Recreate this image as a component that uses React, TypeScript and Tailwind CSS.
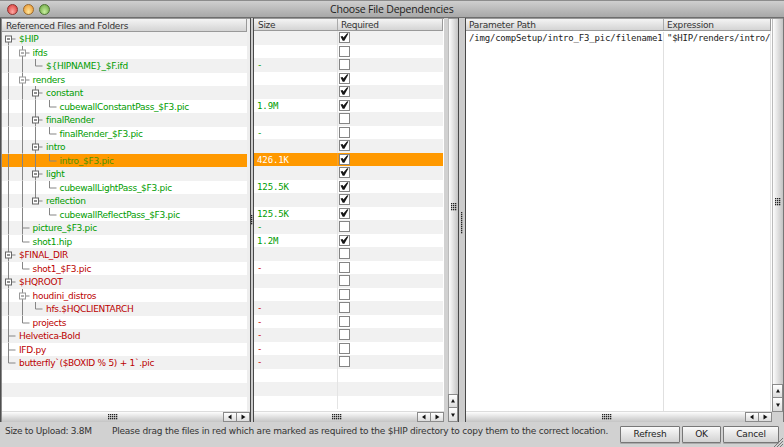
import React from "react";

type Tone = "green" | "red";
type Row = {
  depth: number;
  label: string;
  open?: boolean;
  last?: boolean;
  first?: boolean;
  guides: number[];
  tone: Tone;
  size: string;
  checked: boolean;
  selected?: boolean;
};

const g = (depth: number, label: string, size: string, checked: boolean, guides: number[], extra: Partial<Row> = {}): Row => ({
  depth, label, size, checked, guides, tone: "green", ...extra,
});
const r = (depth: number, label: string, size: string, guides: number[], extra: Partial<Row> = {}): Row => ({
  depth, label, size, checked: false, guides, tone: "red", ...extra,
});

const rows: Row[] = [
  g(0, "$HIP", "", true, [], { open: true, first: true }),
  g(1, "ifds", "", false, [0], { open: true }),
  g(2, "${HIPNAME}_$F.ifd", "-", false, [0, 1], { last: true }),
  g(1, "renders", "", true, [0], { open: true }),
  g(2, "constant", "", true, [0, 1], { open: true }),
  g(3, "cubewallConstantPass_$F3.pic", "1.9M", true, [0, 1, 2], { last: true }),
  g(2, "finalRender", "", false, [0, 1], { open: true }),
  g(3, "finalRender_$F3.pic", "-", false, [0, 1, 2], { last: true }),
  g(2, "intro", "", true, [0, 1], { open: true }),
  g(3, "intro_$F3.pic", "426.1K", true, [0, 1, 2], { last: true, selected: true }),
  g(2, "light", "", true, [0, 1], { open: true }),
  g(3, "cubewallLightPass_$F3.pic", "125.5K", true, [0, 1, 2], { last: true }),
  g(2, "reflection", "", true, [0, 1], { open: true, last: true }),
  g(3, "cubewallReflectPass_$F3.pic", "125.5K", true, [0, 1], { last: true }),
  g(1, "picture_$F3.pic", "-", false, [0]),
  g(1, "shot1.hip", "1.2M", true, [0], { last: true }),
  r(0, "$FINAL_DIR", "", [], { open: true }),
  r(1, "shot1_$F3.pic", "-", [0], { last: true }),
  r(0, "$HQROOT", "", [], { open: true }),
  r(1, "houdini_distros", "", [0], { open: true }),
  r(2, "hfs.$HQCLIENTARCH", "-", [0, 1], { last: true }),
  r(1, "projects", "-", [0], { last: true }),
  r(0, "Helvetica-Bold", "-", []),
  r(0, "IFD.py", "-", []),
  r(0, "butterfly`($BOXID % 5) + 1`.pic", "-", [], { last: true }),
];

const sans = "font-['DejaVu_Sans',sans-serif] text-[9px] whitespace-pre";
const mono = "font-['DejaVu_Sans_Mono',monospace] whitespace-pre";
const headCell = "bg-linear-to-b from-[#f4f4f4] to-[#d4d4d4] border-b border-[#999] text-[#333]";
const trackH = "bg-linear-to-b from-[#fdfdfd] to-[#c4c4c4]";
const trackV = "bg-linear-to-r from-[#fdfdfd] to-[#c4c4c4]";

function Guides({ row }: { row: Row }) {
  const x = (d: number) => Math.round(6 + 13.5 * d) + 0.5;
  const cx = x(row.depth);
  const w = 17 + 13.5 * row.depth;
  return (
    <svg width={w} height="13.5" className="shrink-0 overflow-visible" fill="none" stroke="#858585">
      {row.guides.map((d) => <path key={d} d={`M${x(d)} 0V13.5`} />)}
      {!row.first && <path d={`M${cx} 0V7`} />}
      {!row.last && <path d={`M${cx} 7V13.5`} />}
      <path d={`M${cx} 7H${cx + 7}`} />
      {row.open && (
        <>
          <rect x={cx - 3} y="4" width="6" height="6" fill="#fff" stroke={row.depth === 1 ? "#999" : "#666"} />
          <path d={`M${cx - 1.5} 7H${cx + 1.5}`} stroke={row.depth === 1 ? "#666" : "#222"} />
        </>
      )}
    </svg>
  );
}

function Check({ on }: { on: boolean }) {
  return (
    <svg width="11" height="11" viewBox="0 0 11 11" className="block shrink-0">
      <rect x="0.5" y="0.5" width="10" height="10" fill="#fff" stroke="#858585" />
      {on && <path d="M1.5 4.6 3.6 4 4.4 5.4 8.2 1.3 9.4 1.6 5.4 8.8 3.7 8.8Z" fill="#161616" />}
    </svg>
  );
}

function Arrow({ dir, className }: { dir: "l" | "r" | "u" | "d"; className: string }) {
  const d = { l: "M6.5 2.5V7.5L3 5Z", r: "M3.5 2.5V7.5L7.5 5Z", u: "M3 6.5H7L5 3Z", d: "M3 3.5H7L5 7Z" }[dir];
  return (
    <div className={`flex items-center justify-center border-[#8a8a8a] bg-linear-to-b from-white to-[#dcdcdc] ${className}`}>
      <svg width="10" height="10" className="shrink-0"><path d={d} fill="#111" /></svg>
    </div>
  );
}

function Grip({ cols, rows: n }: { cols: number; rows: number }) {
  return (
    <svg width={cols * 2} height={n * 2} className="shrink-0">
      {Array.from({ length: cols * n }, (_, i) => (
        <rect key={i} x={(i % cols) * 2} y={Math.floor(i / cols) * 2} width="1.3" height="1.3" fill="#222" />
      ))}
    </svg>
  );
}

function HScroll({ pad }: { pad: string }) {
  return (
    <div className={`flex h-[10px] shrink-0 items-center ${trackH}`}>
      <div className={`flex flex-1 items-center ${pad}`}><Grip cols={5} rows={3} /></div>
      <Arrow dir="l" className="h-[10px] w-[14px] border" />
      <Arrow dir="r" className="h-[10px] w-[13px] border-y border-r" />
    </div>
  );
}

export default function App() {
  const all: (Row | null)[] = [...rows, null, null, null];
  return (
    <div className="flex h-[447px] w-[784px] flex-col overflow-hidden bg-[#d1d1d1]">
      <div className="flex h-[18px] shrink-0 items-center border-t border-b border-t-[#8c8c8c] border-b-[#6e6e6e] bg-linear-to-b from-[#cfcfcf] to-[#a8a8a8] pl-[7px]">
        <div className="flex w-[323px] gap-[5px]">
          <i className="size-[11px] rounded-full border border-[#8c3430] bg-radial-[at_50%_75%] from-[#ffaaa4] to-[#d6302e]" />
          <i className="size-[11px] rounded-full border border-[#9b6a2d] bg-radial-[at_50%_75%] from-[#ffe69a] to-[#e89027]" />
          <i className="size-[11px] rounded-full border border-[#4e7434] bg-radial-[at_50%_75%] from-[#c8ee9f] to-[#65a33b]" />
        </div>
        <div className="font-['Open_Sans','Noto_Sans',sans-serif] text-[10.5px] leading-[16px] tracking-[-0.2px] whitespace-pre text-[#1c1c1c]">Choose File Dependencies</div>
      </div>

      <div className="flex h-[404px] shrink-0">
        <div className="w-[2px] shrink-0 bg-linear-to-r from-[#333] to-[#aaa]" />
        <div className="flex w-[248px] shrink-0 flex-col overflow-hidden">
          <div className="flex h-[393px] shrink-0 border-t border-[#999] bg-[#eee]">
            <div className="w-[245px] shrink-0 overflow-hidden bg-white">
              <div className={`h-[13px] border-r pl-[4px] leading-[14px] tracking-[-0.24px] ${headCell} ${sans}`}>Referenced Files and Folders</div>
              {all.map((row, i) => (
                <div key={i} className={`flex h-[13.5px] ${row?.selected ? "bg-[#ff9900]" : i % 2 === 0 ? "bg-[#f1f1f1]" : "bg-white"}`}>
                  {row && <Guides row={row} />}
                  {row && <span className={`${sans} leading-[14px] tracking-[-0.28px] ${row.selected ? "text-[#4c9400]" : row.tone === "green" ? "text-[#009c00]" : "text-[#bb0000]"}`}>{row.label}</span>}
                </div>
              ))}
            </div>
          </div>
          <div className="h-[1px] shrink-0 bg-[#ddd]" />
          <HScroll pad="pl-[106px]" />
        </div>
        <div className="flex w-[4px] shrink-0 items-center border-x border-[#484848] bg-[#ccc]"><Grip cols={1} rows={5} /></div>

        <div className="flex w-[190px] shrink-0 flex-col overflow-hidden">
          <div className="h-[393px] shrink-0 overflow-hidden border-t border-[#999] bg-white">
            <div className={`flex h-[12px] w-[189px] border-r leading-[13px] tracking-[-0.3px] ${headCell} ${sans}`}>
              <div className="w-[84px] border-r border-[#aaa] pl-[4px]">Size</div>
              <div className="pl-[3px]">Required</div>
            </div>
            {all.map((row, i) => (
              <div key={i} className={`flex h-[13.5px] w-[189px] ${row?.selected ? "bg-[#ff9900]" : i % 2 === 0 ? "bg-[#f1f1f1]" : "bg-white"}`}>
                <div className={`w-[84px] border-r pl-[3px] text-[9px] leading-[14px] tracking-[-0.1px] ${mono} ${row?.selected ? "border-[#f2a030] text-white" : row?.tone === "red" ? "border-[#e4e4e4] text-[#cc0000]" : "border-[#e4e4e4] text-[#009c00]"}`}>{row?.size}</div>
                <div className="pt-[1px] pl-[1px]">{row && <Check on={row.checked} />}</div>
              </div>
            ))}
          </div>
          <div className="h-[1px] shrink-0 bg-[#ddd]" />
          <HScroll pad="pl-[78px]" />
        </div>
        <div className="w-[4px] shrink-0" />
        <div className="flex w-[10px] shrink-0 flex-col border-t border-[#999]">
          <div className={`flex h-[375px] items-center justify-center border-l border-[#bbb] ${trackV}`}><Grip cols={3} rows={4} /></div>
          <Arrow dir="u" className="h-[14px] border" />
          <Arrow dir="d" className="h-[14px] border-x border-b" />
        </div>
        <div className="flex w-[8px] shrink-0 items-center justify-center border-x border-[#484848] bg-[#ccc] pt-[5px]"><Grip cols={1} rows={11} /></div>

        <div className="flex w-[306px] shrink-0 flex-col overflow-hidden">
          <div className="h-[393px] shrink-0 overflow-hidden border-t border-[#999] bg-white">
            <div className={`flex h-[12px] w-[305px] border-r leading-[12px] tracking-[-0.2px] ${headCell} ${sans}`}>
              <div className="w-[198px] border-r border-[#aaa] pl-[3px]">Parameter Path</div>
              <div className="pl-[3px]">Expression</div>
            </div>
            <div className={`flex h-[381px] w-[305px] border-r border-[#e4e4e4] pt-[1px] text-[9px] leading-[13px] tracking-[-0.19px] text-[#222] ${mono}`}>
              <div className="w-[198px] shrink-0 overflow-hidden border-r border-[#e0e0e0] pl-[3px]">/img/compSetup/intro_F3_pic/filename1</div>
              <div className="flex-1 overflow-hidden pl-[3px] tracking-[-0.26px]">"$HIP/renders/intro/</div>
            </div>
          </div>
          <div className="h-[1px] shrink-0 bg-[#ddd]" />
          <HScroll pad="pl-[136px]" />
        </div>
        <div className="flex w-[11px] shrink-0 flex-col border-t border-[#999]">
          <div className={`flex h-[365px] items-center justify-center border-l border-[#bbb] ${trackV}`}><Grip cols={3} rows={4} /></div>
          <Arrow dir="u" className="h-[14px] border" />
          <Arrow dir="d" className="h-[14px] border-x border-b" />
          <div className="flex-1 bg-[#d1d1d1]" />
        </div>
        <div className="w-[1px] bg-[#777]" />
      </div>

      <div className={`relative flex h-[25px] pl-[5px] text-[#333] ${sans}`}>
        <span className="w-[107px] shrink-0 leading-[19px] tracking-[-0.3px]">Size to Upload: 3.8M</span>
        <span className="w-[508px] shrink-0 leading-[19px] tracking-[-0.217px]">Please drag the files in red which are marked as required to the $HIP directory to copy them to the correct location.</span>
        <div className="flex gap-[2px] pt-[4px]">
          {["Refresh", "OK", "Cancel"].map((t, i) => (
            <button key={t} className={`h-[17px] rounded-[1px] border border-[#777] bg-linear-to-b from-[#fafafa] to-[#d2d2d2] tracking-[-0.15px] text-[#222] shadow-[0_1px_0_#aaa] ${i === 0 ? "w-[60px]" : i === 1 ? "w-[39px]" : "w-[56px]"}`}>{t}</button>
          ))}
        </div>
        <svg width="9" height="9" className="absolute right-[1px] bottom-0" stroke="#777"><path d="M0 9 9 0M3 9 9 3M6 9 9 6" /></svg>
      </div>
    </div>
  );
}
